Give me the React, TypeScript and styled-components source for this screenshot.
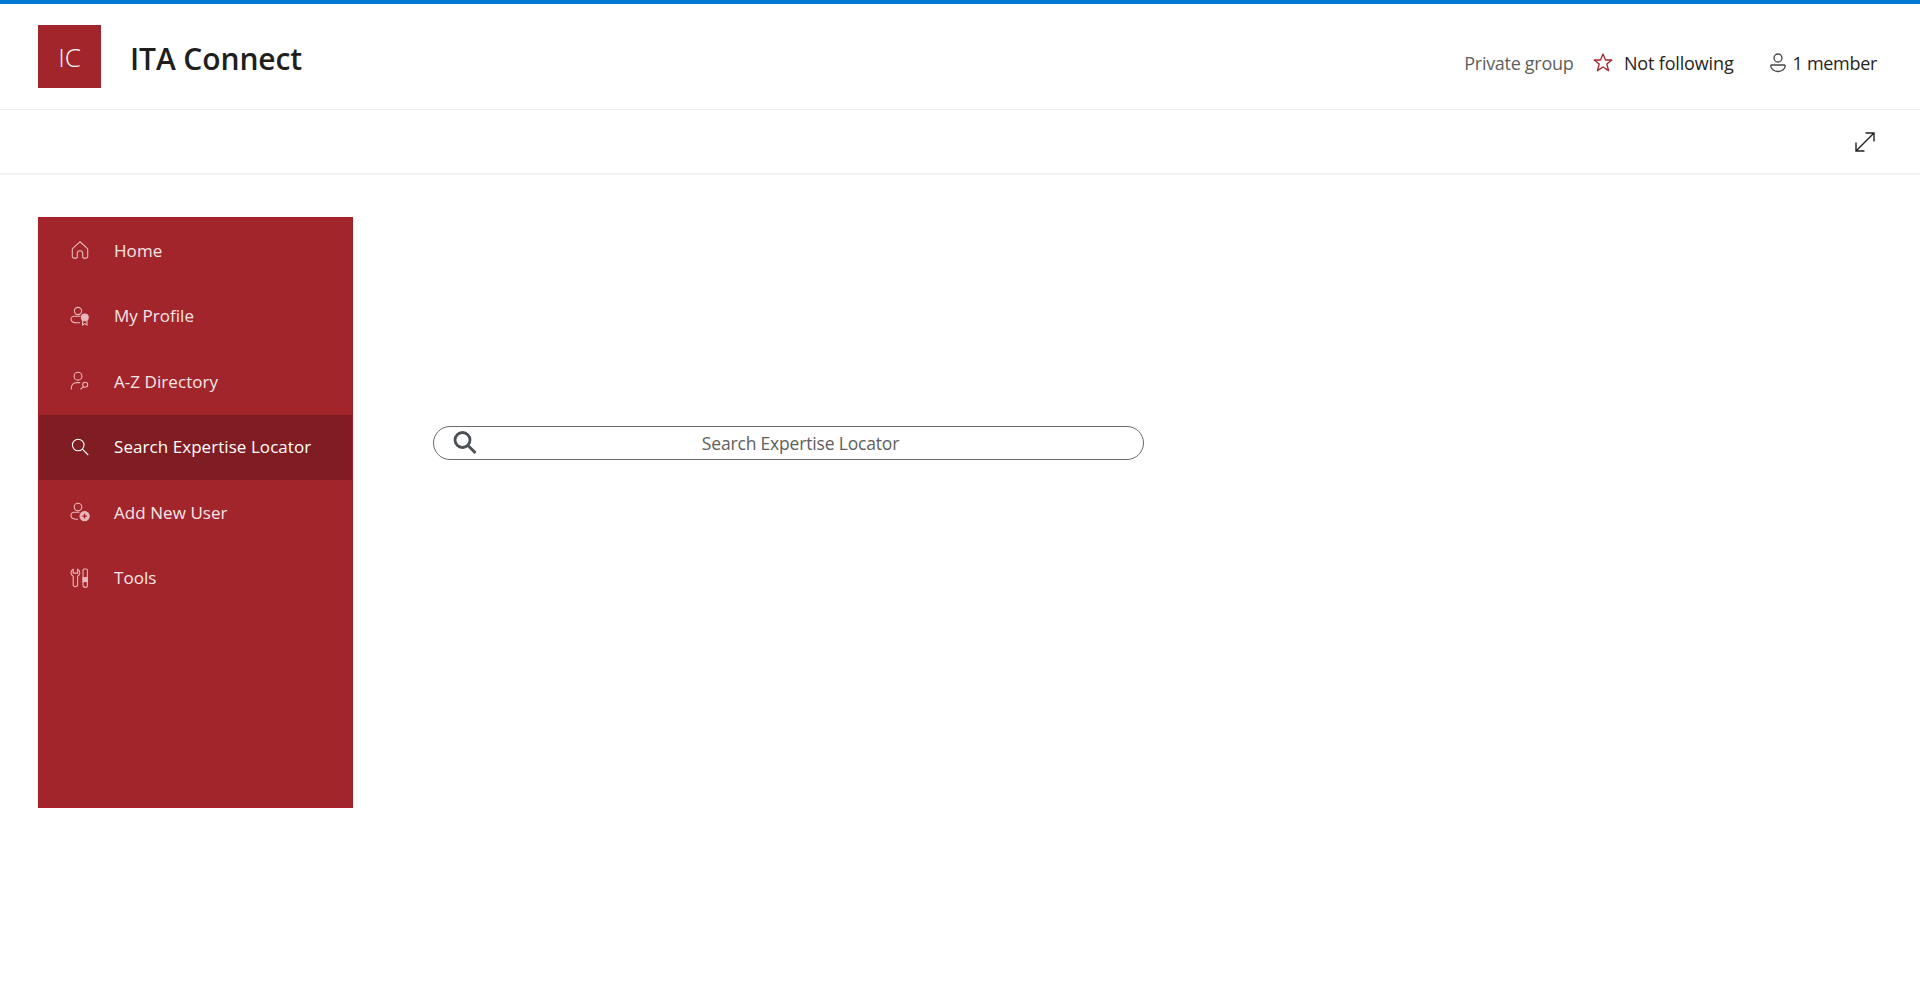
import styled, { createGlobalStyle } from 'styled-components';

const GlobalStyle = createGlobalStyle`
  html, body {
    margin: 0;
    padding: 0;
    background: #ffffff;
    font-family: 'Open Sans', 'Noto Sans', sans-serif;
  }
`;

const iconProps = {
  fill: 'none',
  stroke: 'currentColor',
  strokeWidth: 1.1,
  viewBox: '0 0 20 20',
  width: 20,
  height: 20,
};

const HomeIcon = () => (
  <svg {...iconProps}>
    <path d="M10 1.8 2.8 8.4a1.5 1.5 0 0 0-.5 1.1v7a1.6 1.6 0 0 0 1.6 1.6h2.4a1 1 0 0 0 1-1v-3.6a2.7 2.7 0 0 1 5.4 0v3.6a1 1 0 0 0 1 1h2.4a1.6 1.6 0 0 0 1.6-1.6v-7a1.5 1.5 0 0 0-.5-1.1Z" />
  </svg>
);

const ProfileIcon = () => (
  <svg {...iconProps}>
    <circle cx="8" cy="5" r="3.6" />
    <path d="M10.5 10.2H4.2C2.4 10.2 1 11.5 1 13.2c0 2.3 2.6 3.6 6 3.6h3" />
    <circle cx="14.8" cy="11.4" r="3.4" fill="currentColor" />
    <path d="M12.6 15v4l2.2-1.4 2.2 1.4v-4" />
  </svg>
);

const DirectoryIcon = () => (
  <svg {...iconProps}>
    <circle cx="8" cy="5.2" r="3.9" />
    <path d="M1.3 18.6v-1.4c0-3.4 2.4-5.6 5.7-5.6h3.2" />
    <circle cx="15.2" cy="13.8" r="2.5" />
    <path d="m13.4 15.6-2.9 2.8" />
  </svg>
);

const SearchIcon = () => (
  <svg {...iconProps}>
    <circle cx="8.2" cy="8" r="5.8" />
    <path d="m12.4 12.2 5.8 5.8" />
  </svg>
);

const AddUserIcon = () => (
  <svg {...iconProps}>
    <circle cx="8" cy="5" r="3.8" />
    <path d="M9.5 10.3H4.2C2.4 10.3 1 11.6 1 13.4c0 2.4 2.6 3.8 6 3.8h1" />
    <circle cx="14.6" cy="14.2" r="4.6" fill="currentColor" />
    <path d="M14.6 11.8v4.8M12.2 14.2H17" stroke="#a3252c" strokeWidth="1.3" />
  </svg>
);

const ToolsIcon = () => (
  <svg {...iconProps}>
    <path d="M3.2 1.3C1.8 2 1 3.3 1 4.8c0 1.5.9 2.8 2.2 3.4v8.3a2.2 2.2 0 0 0 4.4 0V8.2c1.3-.6 2.2-1.9 2.2-3.4 0-1.5-.8-2.8-2.2-3.5v3.8H3.2Z" />
    <rect x="13" y="1" width="4.4" height="9" rx="1.2" />
    <path d="M13 10h4.4v7.2a2.2 2.2 0 0 1-4.4 0Z" />
    <rect x="13" y="10" width="4.4" height="3.6" fill="currentColor" />
  </svg>
);

const navItems = [
  { label: 'Home', icon: <HomeIcon /> },
  { label: 'My Profile', icon: <ProfileIcon /> },
  { label: 'A-Z Directory', icon: <DirectoryIcon /> },
  { label: 'Search Expertise Locator', icon: <SearchIcon />, active: true },
  { label: 'Add New User', icon: <AddUserIcon /> },
  { label: 'Tools', icon: <ToolsIcon /> },
];

export default function App() {
  return (
    <Page>
      <GlobalStyle />
      <Header>
        <Brand>
          <Logo>IC</Logo>
          <SiteTitle>ITA Connect</SiteTitle>
        </Brand>
        <Meta>
          <Privacy>Private group</Privacy>
          <Follow>
            <svg width="22" height="22" viewBox="0 0 22 22" fill="none" stroke="#a3252c" strokeWidth="1.3">
              <path d="m11 2 2.5 6h6.3l-5 4 1.8 6.6L11 15l-5.6 3.6L7.2 12l-5-4h6.3Z" strokeLinejoin="round" />
            </svg>
            Not following
          </Follow>
          <Members>
            <svg width="20" height="22" viewBox="0 0 20 22" fill="none" stroke="#444" strokeWidth="1.3">
              <circle cx="10" cy="6" r="4" />
              <path d="M3.5 13h13a.7.7 0 0 1 .7.7c0 3.3-3 5.8-7.2 5.8s-7.2-2.5-7.2-5.8a.7.7 0 0 1 .7-.7Z" />
            </svg>
            1 member
          </Members>
        </Meta>
      </Header>
      <CommandBar>
        <svg width="22" height="22" viewBox="0 0 22 22" fill="none" stroke="#222" strokeWidth="1.4">
          <path d="M2 20 20 2M11.5 2H20v8.5M2 11.5V20h8.5" />
        </svg>
      </CommandBar>
      <Body>
        <Sidebar>
          {navItems.map(item => (
            <NavItem key={item.label} $active={item.active}>
              <NavIcon $active={item.active}>{item.icon}</NavIcon>
              {item.label}
            </NavItem>
          ))}
        </Sidebar>
        <SearchColumn>
          <SearchBox>
            <svg width="26" height="26" viewBox="0 0 26 26" fill="none" stroke="#4a4f54" strokeWidth="2.8">
              <circle cx="10.5" cy="10" r="7.5" />
              <path d="m16 15.5 7.5 7.5" />
            </svg>
            <SearchLabel>Search Expertise Locator</SearchLabel>
          </SearchBox>
        </SearchColumn>
      </Body>
    </Page>
  );
}

const Page = styled.div`
  min-height: 1001px;
  box-sizing: border-box;
  border-top: 4px solid #0078d4;
  background: #ffffff;
`;

const Header = styled.header`
  display: flex;
  justify-content: space-between;
  align-items: flex-start;
  height: 106px;
  box-sizing: border-box;
  padding: 21px 43px 0 38px;
  border-bottom: 1px solid #edebe9;
`;

const Brand = styled.div`
  display: flex;
  align-items: center;
  gap: 29px;
`;

const Logo = styled.div`
  display: flex;
  align-items: center;
  justify-content: center;
  width: 63px;
  height: 63px;
  background: #a3252c;
  color: #ffffff;
  font-size: 26px;
  font-weight: 300;
`;

const SiteTitle = styled.h1`
  margin: 3px 0 0;
  font-size: 30px;
  font-weight: 600;
  letter-spacing: -0.1px;
  color: #201f1e;
`;

const Meta = styled.div`
  display: flex;
  align-items: center;
  height: 30px;
  margin-top: 23px;
  font-size: 18px;
  letter-spacing: -0.15px;
`;

const Privacy = styled.span`
  color: #605e5c;
  margin-right: 19px;
  letter-spacing: -0.3px;
`;

const Follow = styled.span`
  display: flex;
  align-items: center;
  gap: 9.5px;
  color: #252423;
  margin-right: 34px;
`;

const Members = styled.span`
  display: flex;
  align-items: center;
  gap: 5px;
  color: #252423;
  letter-spacing: -0.3px;
`;

const CommandBar = styled.div`
  display: flex;
  justify-content: flex-end;
  align-items: center;
  height: 65px;
  box-sizing: border-box;
  padding-right: 44px;
  border-bottom: 2px solid #f3f2f1;
`;

const Body = styled.main`
  display: flex;
  padding: 42px 0 0 38px;
`;

const Sidebar = styled.nav`
  width: 315px;
  height: 591px;
  box-sizing: border-box;
  background: #a3252c;
  border: 1px solid #b01c25;
`;

const NavItem = styled.div<{ $active?: boolean }>`
  display: flex;
  align-items: center;
  height: 65.5px;
  padding: 0 0 1px 31px;
  box-sizing: border-box;
  background: ${p => (p.$active ? '#7f1d22' : 'transparent')};
  color: ${p => (p.$active ? '#ffffff' : '#f7e6e7')};
  font-size: 17px;
  letter-spacing: 0.06px;
`;

const NavIcon = styled.span<{ $active?: boolean }>`
  display: flex;
  width: 44px;
  flex: none;
  color: ${p => (p.$active ? '#ffffff' : '#e8b9bc')};
`;

const SearchColumn = styled.section`
  padding: 209px 0 0 80px;
`;

const SearchBox = styled.div`
  display: flex;
  align-items: center;
  width: 711px;
  height: 34px;
  box-sizing: border-box;
  padding: 0 20px 0 18px;
  border: 1.5px solid #666b70;
  border-radius: 17px;
`;

const SearchLabel = styled.span`
  flex: 1;
  text-align: center;
  font-size: 17.5px;
  letter-spacing: -0.18px;
  color: #605e5c;
`;
